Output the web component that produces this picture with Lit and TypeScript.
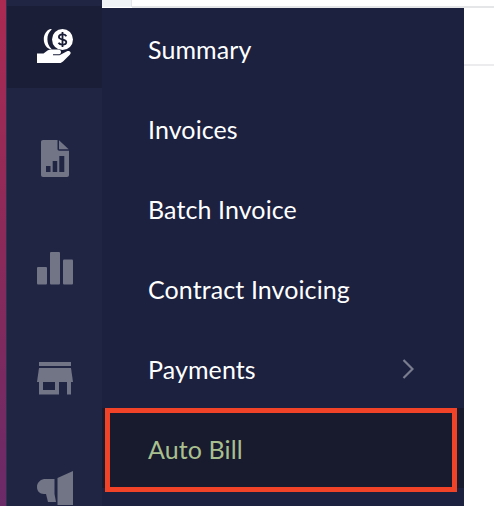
import { LitElement, html, css, svg } from "lit";
import { customElement } from "lit/decorators.js";

const items = ["Summary", "Invoices", "Batch Invoice", "Contract Invoicing", "Payments", "Auto Bill"];

const coin = svg`<svg class="icon" width="36" height="36" viewBox="36 30 36 36">
  <circle cx="61.500" cy="40.500" r="10.500" fill="#fff"/>
  <path d="M65.400 37.200c-.7-1.100-2.200-1.800-3.900-1.800-2.100 0-3.600 1.100-3.600 2.600 0 3.500 7.400 1.600 7.400 5 0 1.600-1.600 2.700-3.800 2.700-1.800 0-3.300-.7-4-1.900" fill="none" stroke="#1a1e37" stroke-width="1.800"/>
  <path d="M61.500 33v15" stroke="#1a1e37" stroke-width="1.800"/>
  <path d="M49.500 30C45.500 31 42.800 35.500 42.800 40.300c0 4.800 2.700 9 6.700 10 1.200.3 1.500 0 .8-.6-2.500-2.300-3.900-5.800-3.900-9.400 0-3.700 1.300-7 3.800-9.300.8-.7.500-1.200-.7-1z" fill="#fff"/>
  <path d="M36 54.500h6.500l4-3c1.500-1 3-1.300 4.500-1h6.500c1.500 0 2.500 1 2.500 2.400 0 1.400-1 2.400-2.500 2.400h-5.500v1h6.500l7.500-4c1.300-.6 2.800-.2 3.400.8.500 1 .2 2-.6 2.700l-6.800 6.700c-1 .9-2 1.500-3.300 1.500H36z" fill="#fff"/>
</svg>`;

const doc = svg`<svg class="icon" width="28" height="37" viewBox="40 140 28 37" fill="#727585">
  <path d="M42 140h14.500v9c0 1 .7 1.700 1.700 1.700H68V175c0 1.200-.8 2-2 2H42c-1.200 0-2-.8-2-2V142c0-1.200.8-2 2-2z"/>
  <path d="M58 140.300L67.700 149.300H58z"/>
  <path d="M45 166h4.500v6H45zM51.700 161h4.500v11h-4.500zM58.300 156h5v16h-5z" fill="#202544"/>
</svg>`;

const bars = svg`<svg class="icon" width="36" height="33" viewBox="36 252 36 33" fill="#727585">
  <rect x="36" y="267" width="10" height="17.500" rx="1"/>
  <rect x="49" y="252" width="10" height="32.500" rx="1"/>
  <rect x="62" y="259.500" width="10" height="25" rx="1"/>
</svg>`;

const store = svg`<svg class="icon" width="36" height="33" viewBox="36 362 36 33" fill="#727585">
  <rect x="38" y="362" width="32" height="4"/>
  <path d="M38 368h32l2 14H36z"/>
  <path d="M38 382h4v8h12v-8h4v12.500H38zM66 382h4v12.500h-4z"/>
</svg>`;

const horn = svg`<svg class="icon" width="36" height="34" viewBox="36 475 36 34" fill="#727585">
  <path d="M72 475v34H56.500v-27z"/>
  <path d="M53.500 483H43c-4.500 1-7 4-7 8s2.500 7 7 7h2l2 8h8l-1.500-8z"/>
</svg>`;

@customElement("app-root")
export class AppRoot extends LitElement {
  static styles = css`
    :host {
      display: grid;
      grid-template-columns: 6px 1px 95px 1fr;
      height: 100vh;
      overflow: hidden;
      background: #fff;
      font-family: "Lato", "Noto Sans", sans-serif;
    }
    .strip { background: linear-gradient(180deg, #ab2a52 0%, #8a2a5a 50%, #6a2a68 100%); }
    .edge { background: #2e3250; }
    .rail {
      background: #202544;
      padding-top: 6px;
      display: flex;
      flex-direction: column;
      overflow: hidden;
    }
    .cell {
      flex: none;
      height: 110px;
      display: flex;
      align-items: center;
      justify-content: center;
    }
    .cell.active {
      height: 82px;
      margin-bottom: 15px;
      background: #1a1e37;
    }
    .cell .icon { display: block; flex: none; }
    .main {
      display: flex;
      flex-direction: column;
      min-width: 0;
      overflow: hidden;
    }
    .top {
      flex: none;
      height: 8px;
      display: grid;
      grid-template-columns: 30px 1fr;
      background: #fff;
    }
    .top .tint { background: #eff3f5; border-right: 1px solid #e3e6e8; height: 7px; }
    .top .line { height: 6px; border-bottom: 2px solid #e4e6e8; }
    .below {
      flex: 1;
      display: grid;
      grid-template-columns: 362px 1fr;
      min-height: 0;
    }
    .panel {
      background: #1c2140;
      display: flex;
      flex-direction: column;
      position: relative;
    }
    .row {
      flex: none;
      height: 80px;
      box-sizing: border-box;
      padding: 2px 50px 0 46px;
      display: flex;
      align-items: center;
      justify-content: space-between;
      color: #fff;
      font-size: 25px;
      letter-spacing: 0.1px;
      line-height: 1;
    }
    .row.current { background: #181a2e; color: #a9c08e; }
    .mark {
      position: absolute;
      left: 3px;
      top: 400px;
      width: 352px;
      height: 84px;
      box-sizing: border-box;
      border: 5px solid #f04328;
      pointer-events: none;
    }
    .side { padding-top: 56px; }
    .side .rule { height: 2px; background: #ececee; }
  `;

  render() {
    return html`
      <div class="strip"></div>
      <div class="edge"></div>
      <nav class="rail">
        <div class="cell active">${coin}</div>
        <div class="cell">${doc}</div>
        <div class="cell">${bars}</div>
        <div class="cell">${store}</div>
        <div class="cell">${horn}</div>
      </nav>
      <div class="main">
        <div class="top"><div class="tint"></div><div class="line"></div></div>
        <div class="below">
          <div class="panel">
            ${items.map(
              (t) => html`<div class="row ${t === "Auto Bill" ? "current" : ""}">
                <span>${t}</span>
                ${t === "Payments"
                  ? html`<svg width="12" height="20" viewBox="0 0 12 20" fill="none" stroke="#7a7d8e" stroke-width="2.200"><path d="M1.500 1l9 9-9 9"/></svg>`
                  : ""}
              </div>`
            )}
            <div class="mark"></div>
          </div>
          <div class="side"><div class="rule"></div></div>
        </div>
      </div>
    `;
  }
}
